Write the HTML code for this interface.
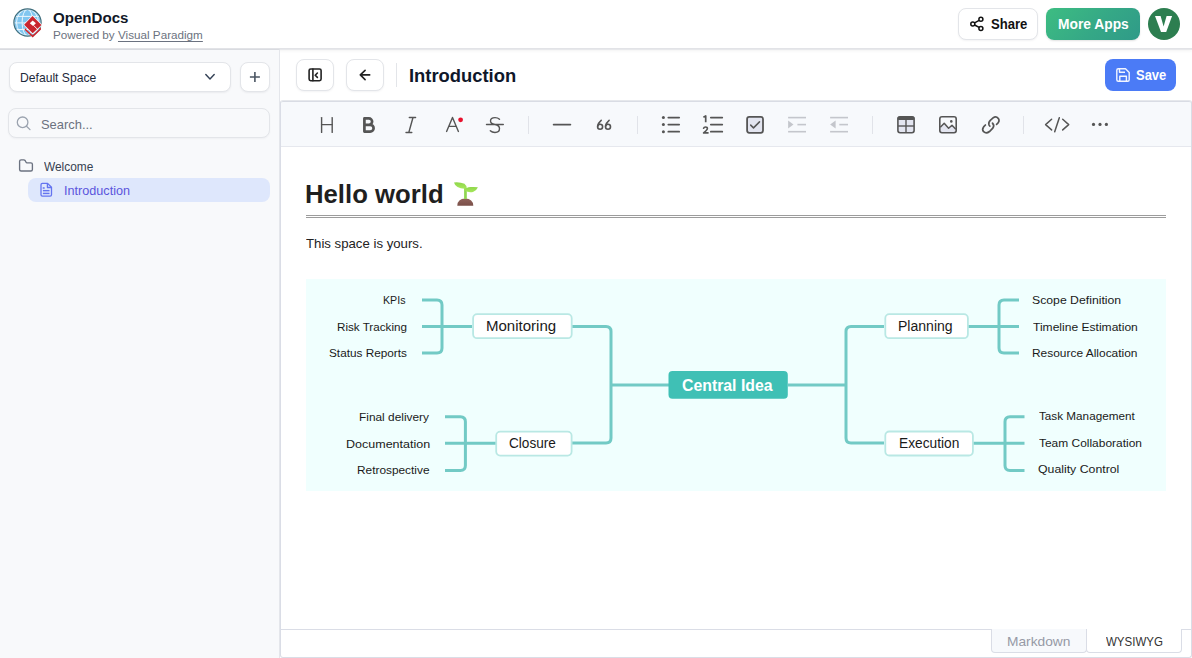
<!DOCTYPE html>
<html><head><meta charset="utf-8">
<style>
*{box-sizing:border-box;margin:0;padding:0}
html,body{width:1192px;height:658px;overflow:hidden;background:#fff;font-family:"Liberation Sans",sans-serif;}
.a{position:absolute}
.t{position:absolute;white-space:nowrap;line-height:1;transform-origin:0 0;font-family:"Liberation Sans",sans-serif}
.btn{position:absolute;border:1px solid #e3e5e9;border-radius:8px;background:#fff;box-shadow:0 1px 2px rgba(16,24,40,.05)}
</style></head><body>

<!-- main area top shadow -->
<div class="a" style="left:0;top:0;width:1192px;height:49px;background:#fff;border-bottom:1px solid #e2e3e7;box-shadow:0 1px 0 #e7e8eb,0 2px 3px rgba(0,0,0,.05)"></div>
<!-- sidebar -->
<div class="a" style="left:0;top:49px;width:280px;height:609px;background:#f8f9fb;border-right:1px solid #e4e6eb;border-top:1px solid #d9dbe0"></div>

<!-- header buttons -->
<div class="btn" style="left:958px;top:8px;width:80px;height:32px"></div>
<div class="a" style="left:1046px;top:8px;width:94px;height:32px;border-radius:8px;background:linear-gradient(135deg,#3dbd82 0%,#35a886 55%,#2f9a88 100%);box-shadow:0 1px 2px rgba(0,0,0,.12)"></div>
<div class="a" style="left:1148px;top:8px;width:32px;height:32px;border-radius:50%;background:#2d7e50"></div>

<!-- sidebar boxes -->
<div class="btn" style="left:9px;top:62px;width:221.5px;height:30px;box-shadow:0 1px 2px rgba(16,24,40,.06)"></div>
<div class="btn" style="left:239.5px;top:62px;width:30.5px;height:30px;box-shadow:0 1px 2px rgba(16,24,40,.06)"></div>
<div class="a" style="left:8px;top:108px;width:262px;height:30px;border:1px solid #e3e5e9;border-radius:8px;background:#f8f9fb;box-shadow:0 1px 2px rgba(16,24,40,.04)"></div>
<div class="a" style="left:28px;top:178px;width:242px;height:24px;border-radius:8px;background:#dee7fc"></div>

<!-- top bar -->
<div class="btn" style="left:296px;top:59px;width:38px;height:32px"></div>
<div class="btn" style="left:346px;top:59px;width:38px;height:32px"></div>
<div class="a" style="left:396px;top:63px;width:1px;height:24px;background:#e3e5e9"></div>
<div class="a" style="left:1105px;top:59px;width:71px;height:32px;border-radius:8px;background:#4b7bf6"></div>

<!-- editor frame -->
<div class="a" style="left:280px;top:100px;width:912px;height:558px;border:1px solid #dadde6;border-top-color:#e6e8ec;border-radius:3px;background:#fff"></div>
<div class="a" style="left:281px;top:101px;width:910px;height:46px;background:#f7f9fc;border-top:1px solid #d9dce4;border-bottom:1px solid #e6e8ee;border-radius:2px 2px 0 0"></div>

<!-- content -->
<div class="a" style="left:306px;top:215px;width:860px;height:3px;border-top:1px solid #9c9c9c;border-bottom:1px solid #9c9c9c"></div>
<div class="a" style="left:306px;top:279px;width:860px;height:212px;background:#f0fffe"></div>

<!-- bottom tabs -->
<div class="a" style="left:281px;top:629px;width:910px;height:1px;background:#dadde6"></div>
<div class="a" style="left:991px;top:629px;width:96px;height:24px;background:#f7f9fc;border:1px solid #dadde6;border-top:none;border-radius:0 0 4px 4px"></div>
<div class="a" style="left:1086px;top:629px;width:96px;height:24px;background:#fff;border:1px solid #dadde6;border-top:none;border-radius:0 0 4px 4px"></div>

<!-- ALL ICONS / LINES in page coordinates -->
<svg class="a" style="left:0;top:0" width="1192" height="658" viewBox="0 0 1192 658" fill="none">
  <!-- logo -->
  <defs><clipPath id="gc"><circle cx="27.5" cy="22.5" r="13.1"/></clipPath>
  <linearGradient id="lf" x1="0" y1="0" x2="0" y2="1"><stop offset="0" stop-color="#8fd64a"/><stop offset="1" stop-color="#a6e85c"/></linearGradient>
  <linearGradient id="sl" x1="0" y1="0" x2="0" y2="1"><stop offset="0" stop-color="#8f625a"/><stop offset="1" stop-color="#7a4f48"/></linearGradient></defs>
  <circle cx="27.5" cy="22.5" r="13.1" fill="#80c6f0"/>
  <g clip-path="url(#gc)" stroke="#eaf6fd" stroke-width="1">
    <line x1="10" y1="16.4" x2="45" y2="16.4"/><line x1="10" y1="22.9" x2="45" y2="22.9"/><line x1="10" y1="29.5" x2="45" y2="29.5"/>
    <ellipse cx="27.5" cy="22.5" rx="5.4" ry="13.1"/>
    <ellipse cx="27.5" cy="22.5" rx="11" ry="13.1"/>
  </g>
  <circle cx="27.5" cy="22.5" r="13.6" stroke="#3d6c7b" stroke-width="1.2"/>
  <path d="M32.5 15.2 L42.4 24.9 L32.7 34.3 L23.2 24.8 Z" fill="#fff"/>
  <path d="M32.5 16.1 L41.5 24.9 L32.7 33.2 L24.1 24.8 Z" fill="#c9262f"/>
  <path d="M32.7 20.4 L35.9 23.3 L33.1 26 L29.8 23.3 Z" fill="#fff"/>
  <path d="M33.6 25.5 L38 29.8" stroke="#fff" stroke-width="0.9"/>
  <path d="M24.2 27.4 L32.7 35.2 L41.6 26.8 L41.6 29.1 L32.7 37.6 L24.2 29.7 Z" fill="#fff" opacity="0.6"/>
  <path d="M24.8 27.9 L32.7 35.3 L41 27.5 L41 29.6 L32.7 37.5 L24.8 30 Z" fill="#c9262f"/>

  <polygon points="1155,15.9 1160.6,15.9 1163.6,26.4 1166.6,15.9 1172.1,15.9 1166.2,32 1161,32" fill="#fff"/>
  <!-- share icon -->
  <g stroke="#111" stroke-width="1.5">
    <circle cx="980.9" cy="19.2" r="2"/><circle cx="972.8" cy="23.9" r="2"/><circle cx="980.9" cy="28.5" r="2"/>
    <line x1="974.6" y1="22.8" x2="979.1" y2="20.3"/><line x1="974.6" y1="25" x2="979.1" y2="27.4"/>
  </g>

  <!-- sidebar icons -->
  <path d="M205.8 74.6 L210 78.9 L214.2 74.6" stroke="#334155" stroke-width="1.45" stroke-linecap="round" stroke-linejoin="round"/>
  <path d="M254.9 72 V82 M249.9 77 H259.9" stroke="#4b5563" stroke-width="1.6"/>
  <circle cx="22.6" cy="122.3" r="5.3" stroke="#9ba3af" stroke-width="1.3"/>
  <line x1="26.5" y1="126.2" x2="30" y2="129.6" stroke="#9ba3af" stroke-width="1.3" stroke-linecap="round"/>
  <path d="M19.6 161.3 Q19.6 159.8 21.1 159.8 H23.8 Q24.6 159.8 25.1 160.5 L25.9 162 Q26.3 162.8 27 162.8 H30.9 Q32.4 162.8 32.4 164.3 V169.5 Q32.4 171 30.9 171 H21.1 Q19.6 171 19.6 169.5 Z" stroke="#6b7280" stroke-width="1.35" stroke-linejoin="round"/>
  <g stroke="#6474f0" stroke-width="1.3" stroke-linejoin="round">
    <path d="M41 184.8 Q41 183.4 42.4 183.4 H47.6 L51.5 187.3 V194.7 Q51.5 196.1 50.1 196.1 H42.4 Q41 196.1 41 194.7 Z"/>
    <path d="M47.4 183.6 V187.5 H51.3" />
    <rect x="43" y="190.6" width="6.4" height="2.9" fill="#c9d3fa" stroke="none"/><line x1="43.2" y1="188" x2="44.2" y2="188" stroke-linecap="round"/><line x1="42.9" y1="190.6" x2="49.5" y2="190.6"/><line x1="42.9" y1="193.5" x2="49.5" y2="193.5"/>
  </g>

  <!-- top bar icons -->
  <g stroke="#222" stroke-width="1.6" stroke-linecap="round" stroke-linejoin="round">
    <rect x="309.1" y="69" width="12" height="11.7" rx="1.6"/>
    <line x1="312.9" y1="69" x2="312.9" y2="80.7"/>
    <path d="M317.4 73 L315.2 75.2 L317.4 77.4"/>
    <path d="M360.3 74.9 H369.7 M365.1 70.3 L360.3 74.9 L365.1 79.6"/>
  </g>
  <!-- save icon -->
  <g stroke="#f2f5ff" stroke-width="1.4" stroke-linejoin="round">
    <path d="M1116.8 70.3 Q1116.8 68.8 1118.3 68.8 H1125.5 L1129.2 72.4 V79.8 Q1129.2 81.3 1127.7 81.3 H1118.3 Q1116.8 81.3 1116.8 79.8 Z"/>
    <path d="M1119.5 69 V72.2 H1125"/>
    <path d="M1119.8 81.2 V76.2 H1126.4 V81.2"/>
  </g>

  <!-- toolbar icons -->
  <g stroke="#555" stroke-width="1.4" stroke-linecap="round" stroke-linejoin="round">
    <line x1="321.6" y1="117.6" x2="321.6" y2="132.4"/><line x1="332.2" y1="117.6" x2="332.2" y2="132.4"/><line x1="321.6" y1="124.6" x2="332.2" y2="124.6"/>
    <path stroke-width="2.7" d="M364.4 118.4 H368.9 A3.2 3.2 0 0 1 368.9 124.8 H364.4 Z M364.4 124.8 H370.2 A3.4 3.4 0 0 1 370.2 131.6 H364.4 Z"/>
    <path d="M409.3 117.5 H415.6 M406 132.5 H411.8 M413 117.5 L408.8 132.5"/>
    <path d="M446.6 131.4 L452.5 117.4 L458.4 131.4 M449.2 126.4 H455.8"/>
    <path d="M486.5 124.5 H503.3 M499.5 119.3 Q497.8 117.6 495 117.6 Q490.5 117.6 490.5 121 Q490.5 123.6 495 124.5 Q499.5 125.5 499.5 128.6 Q499.5 132.5 495 132.5 Q492 132.5 490.3 130.8"/>
  </g>
  <circle cx="460.6" cy="119.8" r="2.4" fill="#e8112d"/>
  <g stroke="#e1e3e9" stroke-width="1"><line x1="528.5" y1="116" x2="528.5" y2="134"/><line x1="637.5" y1="116" x2="637.5" y2="134"/><line x1="872.5" y1="116" x2="872.5" y2="134"/><line x1="1023.5" y1="116" x2="1023.5" y2="134"/></g>
  <line x1="553.6" y1="124.6" x2="570.4" y2="124.6" stroke="#555" stroke-width="1.7" stroke-linecap="round"/>
  <g stroke="#555" stroke-width="1.6" stroke-linecap="round"><circle cx="600.1" cy="126.8" r="2.5"/><path d="M597.7 126.2 Q598.3 122.6 601.2 120.3"/><circle cx="608" cy="126.8" r="2.5"/><path d="M605.6 126.2 Q606.2 122.6 609.1 120.3"/></g>
  <g fill="#555"><circle cx="663.4" cy="117.6" r="1.5"/><circle cx="663.4" cy="124.6" r="1.5"/><circle cx="663.4" cy="131.7" r="1.5"/></g>
  <g stroke="#555" stroke-width="1.7" stroke-linecap="round">
    <line x1="668.3" y1="117.6" x2="679.2" y2="117.6"/><line x1="668.3" y1="124.6" x2="679.2" y2="124.6"/><line x1="668.3" y1="131.7" x2="679.2" y2="131.7"/>
    <line x1="710.8" y1="117.6" x2="722.3" y2="117.6"/><line x1="710.8" y1="124.6" x2="722.3" y2="124.6"/><line x1="710.8" y1="131.7" x2="722.3" y2="131.7"/>
  </g>
  <path stroke="#555" stroke-width="1.7" stroke-linejoin="round" d="M703.4 117.2 L705.7 116 V122.3"/>
  <path stroke="#555" stroke-width="1.6" stroke-linejoin="round" stroke-linecap="round" d="M703.6 128.3 Q704 127 705.5 127 Q707.4 127 707.4 128.6 Q707.4 129.9 703.6 132.9 H708"/>
  <rect x="747.1" y="116.9" width="15.9" height="15.9" rx="2.2" fill="#e3e5f0" stroke="#555" stroke-width="1.8"/>
  <path stroke="#555" stroke-width="1.5" stroke-linecap="round" stroke-linejoin="round" d="M750.7 125.1 L753.5 127.9 L759.5 121.9"/>
  <g stroke="#c4c6cc" stroke-width="1.6">
    <line x1="788.1" y1="117.6" x2="806" y2="117.6"/><line x1="788.1" y1="131.7" x2="806" y2="131.7"/><line x1="797.4" y1="124.6" x2="806" y2="124.6"/>
    <line x1="830.1" y1="117.6" x2="848" y2="117.6"/><line x1="830.1" y1="131.7" x2="848" y2="131.7"/><line x1="839.3" y1="124.6" x2="848" y2="124.6"/>
  </g>
  <g fill="#c4c6cc"><path d="M788.1 120.6 L793.5 124.6 L788.1 128.6 Z"/><path d="M835.6 120.6 L830.1 124.6 L835.6 128.6 Z"/></g>
  <g stroke="#555" stroke-width="1.6" stroke-linejoin="round">
    <rect x="897.9" y="116.8" width="16.2" height="16" rx="2.2" fill="#e3e5f0"/>
    <rect x="897.5" y="116.5" width="17" height="3.4" rx="1.5" fill="#555" stroke="none"/>
    <line x1="906" y1="119" x2="906" y2="132.6" stroke-width="1.4"/><line x1="898" y1="126" x2="914" y2="126" stroke-width="1.4"/>
    <path d="M940.3 127.3 L944.2 123.3 L948.6 128.3 L952 125.3 L955.8 129.3 V132.2 H940.3 Z" fill="#e3e5f0" stroke="none"/>
    <path d="M940.3 127.3 L944.2 123.3 L948.6 128.3 L952 125.3 L955.8 129.3" stroke-width="1.5"/>
    <rect x="939.8" y="116.8" width="16.4" height="16" rx="2.2"/>
  </g>
  <circle cx="951.3" cy="121.4" r="1.3" fill="#555"/>
  <g stroke="#555" stroke-width="1.7" stroke-linecap="round">
    <path d="M989.8 126.2 L989 124.8 Q988.2 122.3 990.3 120.3 L993.3 117.7 Q996.1 115.9 998.4 118.6 Q1000.3 121.3 996.6 124.4"/>
    <path d="M985.4 125 L983.6 126.9 Q981.7 129.4 983.6 131.7 Q986.3 134.1 989.5 131.5 L992.8 128.2 Q994.8 125.7 992.5 123.2"/>
  </g>
  <path stroke="#555" stroke-width="1.5" stroke-linecap="round" stroke-linejoin="round" d="M1051.6 119.3 L1045.6 124.6 L1051.6 129.9 M1059.3 117.8 L1054.7 131.8 M1062.7 119.3 L1068.7 124.6 L1062.7 129.9"/>
  <g fill="#555"><circle cx="1093.5" cy="124.4" r="1.6"/><circle cx="1100" cy="124.4" r="1.6"/><circle cx="1106.4" cy="124.4" r="1.6"/></g>

  <!-- emoji seedling -->
  <path d="M457.3 205.8 Q457.5 198.8 465.3 198.6 Q473 198.8 473.3 205.8 Z" fill="url(#sl)"/>
  <rect x="464.1" y="188" width="2.7" height="11" fill="#8fd650"/>
  <path d="M454 182.4 Q460 181.8 464.5 183.8 Q466.6 185.4 466.9 188.6 Q461 189.1 457.5 187.1 Q454.8 185.5 454 182.4 Z" fill="url(#lf)"/>
  <path d="M464.5 190.2 Q466 187.5 470.5 187.1 Q474.5 186.9 477.9 187.2 Q476.6 190.6 473 192 Q468.5 193.2 464.5 190.2 Z" fill="url(#lf)"/>

  <!-- mindmap lines -->
  <g stroke="#72cac5" stroke-width="3" stroke-linejoin="round">
    <path d="M422 300 H437 Q442 300 442 305 V348 Q442 353 437 353 H422 M422 326.5 H472"/>
    <path d="M572 326.5 H606 Q611 326.5 611 331.5 V438 Q611 443 606 443 H572 M611 385 H669"/>
    <path d="M445 416.7 H460.4 Q465.4 416.7 465.4 421.7 V465.4 Q465.4 470.4 460.4 470.4 H445 M445 443.2 H496"/>
    <path d="M788 385 H846 M884 326.5 H851 Q846 326.5 846 331.5 V438 Q846 443 851 443 H884"/>
    <path d="M968 326.5 H1019 M1019 300 H1004 Q999 300 999 305 V348 Q999 353 1004 353 H1019"/>
    <path d="M973 443.2 H1024.5 M1024.5 416.7 H1010 Q1005 416.7 1005 421.7 V465.4 Q1005 470.4 1010 470.4 H1024.5"/>
  </g>
  <g stroke="#b9e8e4" stroke-width="1.8" fill="#fff">
    <rect x="473.1" y="314.2" width="98.6" height="24" rx="4"/>
    <rect x="496.2" y="431.6" width="75.4" height="24" rx="4"/>
    <rect x="885.3" y="314.2" width="82.6" height="24" rx="4"/>
    <rect x="885.3" y="431.5" width="87.6" height="24" rx="4"/>
  </g>
  <rect x="668.5" y="371.1" width="119.3" height="27.7" rx="4" fill="#3fc0b5"/>
</svg>

<div class="t" style="left:52.97px;top:11.11px;font-size:14.7px;font-weight:bold;color:#111827;transform:scaleX(1.0278);">OpenDocs</div>
<div class="t" style="left:53.21px;top:29.87px;font-size:11.8px;font-weight:normal;color:#6b7280;transform:scaleX(0.9907);">Powered by <span style='text-decoration:underline;text-decoration-skip-ink:none;text-underline-offset:1.5px'>Visual Paradigm</span></div>
<div class="t" style="left:991.08px;top:16.64px;font-size:14.3px;font-weight:bold;color:#111111;transform:scaleX(0.9158);">Share</div>
<div class="t" style="left:1057.53px;top:17.44px;font-size:14.3px;font-weight:bold;color:#ffffff;transform:scaleX(0.9653);">More Apps</div>
<div class="t" style="left:409.10px;top:67.06px;font-size:18.4px;font-weight:bold;color:#0f172a;transform:scaleX(0.9990);">Introduction</div>
<div class="t" style="left:1136.09px;top:67.65px;font-size:14.3px;font-weight:bold;color:#ffffff;transform:scaleX(0.9062);">Save</div>
<div class="t" style="left:20.30px;top:72.23px;font-size:12.2px;font-weight:normal;color:#1e293b;transform:scaleX(0.9960);">Default Space</div>
<div class="t" style="left:40.53px;top:118.19px;font-size:13.3px;font-weight:normal;color:#6b7280;transform:scaleX(0.9706);">Search...</div>
<div class="t" style="left:44.40px;top:161.08px;font-size:12.5px;font-weight:normal;color:#374151;transform:scaleX(0.9510);">Welcome</div>
<div class="t" style="left:63.76px;top:184.53px;font-size:12.2px;font-weight:normal;color:#5b55dc;transform:scaleX(1.0371);">Introduction</div>
<div class="t" style="left:305.07px;top:182.31px;font-size:25.4px;font-weight:bold;color:#1f1f1f;transform:scaleX(1.0128);">Hello world</div>
<div class="t" style="left:306.40px;top:236.51px;font-size:13.4px;font-weight:normal;color:#222222;transform:scaleX(0.9855);">This space is yours.</div>
<div class="t" style="left:383.31px;top:295.42px;font-size:10.8px;font-weight:normal;color:#1a1a1a;transform:scaleX(0.9864);">KPIs</div>
<div class="t" style="left:336.92px;top:322.42px;font-size:10.8px;font-weight:normal;color:#1a1a1a;transform:scaleX(1.0794);">Risk Tracking</div>
<div class="t" style="left:328.51px;top:348.32px;font-size:10.8px;font-weight:normal;color:#1a1a1a;transform:scaleX(1.0914);">Status Reports</div>
<div class="t" style="left:359.20px;top:411.62px;font-size:10.8px;font-weight:normal;color:#1a1a1a;transform:scaleX(1.1000);">Final delivery</div>
<div class="t" style="left:346.14px;top:439.32px;font-size:10.8px;font-weight:normal;color:#1a1a1a;transform:scaleX(1.1592);">Documentation</div>
<div class="t" style="left:357.10px;top:465.32px;font-size:10.8px;font-weight:normal;color:#1a1a1a;transform:scaleX(1.0985);">Retrospective</div>
<div class="t" style="left:1031.97px;top:295.22px;font-size:10.8px;font-weight:normal;color:#1a1a1a;transform:scaleX(1.1338);">Scope Definition</div>
<div class="t" style="left:1033.10px;top:321.52px;font-size:10.8px;font-weight:normal;color:#1a1a1a;transform:scaleX(1.1172);">Timeline Estimation</div>
<div class="t" style="left:1032.29px;top:348.32px;font-size:10.8px;font-weight:normal;color:#1a1a1a;transform:scaleX(1.1053);">Resource Allocation</div>
<div class="t" style="left:1039.30px;top:411.12px;font-size:10.8px;font-weight:normal;color:#1a1a1a;transform:scaleX(1.0852);">Task Management</div>
<div class="t" style="left:1039.30px;top:438.12px;font-size:10.8px;font-weight:normal;color:#1a1a1a;transform:scaleX(1.1065);">Team Collaboration</div>
<div class="t" style="left:1037.86px;top:464.12px;font-size:10.8px;font-weight:normal;color:#1a1a1a;transform:scaleX(1.1386);">Quality Control</div>
<div class="t" style="left:485.71px;top:320.17px;font-size:13.8px;font-weight:normal;color:#1a1a1a;transform:scaleX(1.0889);">Monitoring</div>
<div class="t" style="left:509.02px;top:436.87px;font-size:13.8px;font-weight:normal;color:#1a1a1a;transform:scaleX(0.9848);">Closure</div>
<div class="t" style="left:898.38px;top:320.07px;font-size:13.8px;font-weight:normal;color:#1a1a1a;transform:scaleX(1.0173);">Planning</div>
<div class="t" style="left:898.61px;top:437.07px;font-size:13.8px;font-weight:normal;color:#1a1a1a;transform:scaleX(0.9949);">Execution</div>
<div class="t" style="left:681.89px;top:378.24px;font-size:15.6px;font-weight:bold;color:#ffffff;transform:scaleX(1.0148);">Central Idea</div>
<div class="t" style="left:1007.26px;top:634.98px;font-size:13.2px;font-weight:normal;color:#969aa6;transform:scaleX(1.0424);">Markdown</div>
<div class="t" style="left:1105.90px;top:635.82px;font-size:12.8px;font-weight:normal;color:#333333;transform:scaleX(0.9000);">WYSIWYG</div>
</body></html>
